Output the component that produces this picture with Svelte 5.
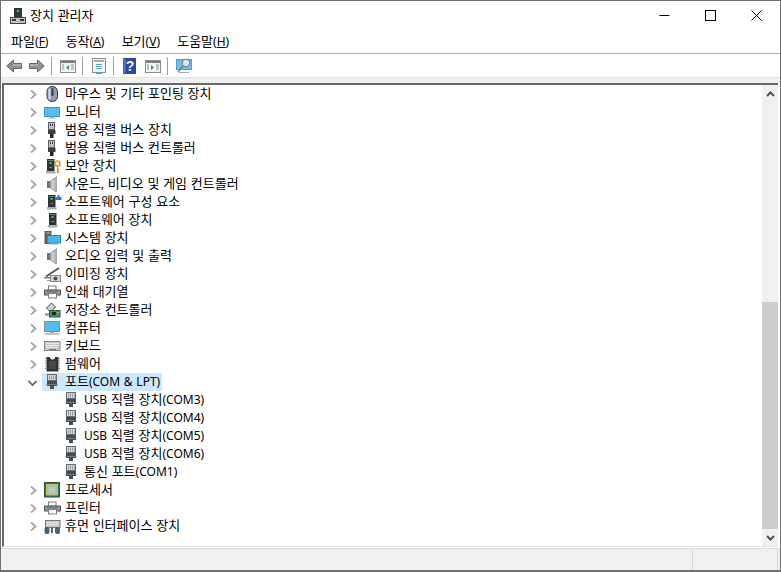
<script>
  const menus = [['파일','F'],['동작','A'],['보기','V'],['도움말','H']];
  const rows = [
    ['마우스 및 기타 포인팅 장치','mouse'],['모니터','monitor'],['범용 직렬 버스 장치','usb'],['범용 직렬 버스 컨트롤러','usb'],
    ['보안 장치','security'],['사운드, 비디오 및 게임 컨트롤러','speaker'],['소프트웨어 구성 요소','softcomp'],['소프트웨어 장치','soft'],
    ['시스템 장치','system'],['오디오 입력 및 출력','speaker'],['이미징 장치','camera'],['인쇄 대기열','printer'],
    ['저장소 컨트롤러','storage'],['컴퓨터','computer'],['키보드','keyboard'],['펌웨어','chip'],
  ];
  const ports = ['USB 직렬 장치(COM3)','USB 직렬 장치(COM4)','USB 직렬 장치(COM5)','USB 직렬 장치(COM6)','통신 포트(COM1)'];
  const after = [['프로세서','cpu'],['프린터','printer'],['휴먼 인터페이스 장치','hid']];
  const runs = (s) => s.split(/([\x20-\x7e]+)/).filter(Boolean).map((t) => ({ t, ko: !/^[\x20-\x7e]+$/.test(t) }));
</script>

{#snippet txt(s)}{#each runs(s) as r}<span class:ko={r.ko}>{r.t}</span>{/each}{/snippet}

{#snippet tower(x, y)}
  <rect x={x} y={y} width="7.500" height="12" fill="#2f3336"/>
  <rect x={x+1} y={y+1} width="5.500" height="1" fill="#70767a"/>
  <rect x={x+2.500} y={y+3} width="2" height="2" fill="#2fdc4a"/>
  <rect x={x+2} y={y+8} width="3.500" height="1" fill="#70767a"/>
  <rect x={x-1} y={y+12} width="9.500" height="2.500" fill="#a9adb0"/>
{/snippet}

{#snippet port()}
  <rect x="3.500" y="2.500" width="9" height="6" fill="#d6d8da" stroke="#686d71" stroke-width="1"/>
  <path d="M5.500 3.500v4M7.500 3.500v4M9.500 3.500v4M11.500 3.500v4" stroke="#9a9ea2"/>
  <rect x="3" y="9" width="10" height="5" fill="#484c50"/>
  <rect x="2.500" y="12" width="11" height="1" fill="#73787c"/>
  <rect x="6" y="14" width="4" height="3" fill="#484c50"/>
{/snippet}

{#snippet icon(kind)}
  <svg class="ic" width="18" height="18" viewBox="0 0 18 18">
    {#if kind==='mouse'}
      <rect x="3" y="2.500" width="10.500" height="15" rx="5" fill="#8f9db0" stroke="#34383c"/>
      <rect x="4.500" y="4.500" width="2" height="11" rx="1" fill="#d5dce4"/>
      <rect x="7.300" y="4" width="2.200" height="8" rx="1" fill="#33435a"/>
    {:else if kind==='monitor'}
      <rect x=".5" y="5.500" width="15" height="9" fill="#58bdf0" stroke="#3a95c8"/>
      <rect x="6" y="15" width="4" height="1" fill="#a8c0cc"/><rect x="4" y="16" width="8" height="1" fill="#c5d2d9"/>
    {:else if kind==='usb'}
      <rect x="4.500" y="2.500" width="6" height="7" fill="#bcc0c3" stroke="#5b6064"/>
      <rect x="6" y="4" width="1" height="2" fill="#444"/><rect x="8" y="4" width="1" height="2" fill="#444"/>
      <rect x="4" y="10" width="7.500" height="4" fill="#3a3e42"/><rect x="6" y="14" width="3.500" height="4" fill="#222527"/>
    {:else if kind==='security'}
      {@render tower(3, 3)}
      <circle cx="13.500" cy="7.500" r="2.500" fill="none" stroke="#d9a22a" stroke-width="1.700"/>
      <path d="M13.500 10v7M13.500 13.500h2M13.500 16h2" stroke="#cf9a28" stroke-width="1.300"/>
    {:else if kind==='speaker'}
      <rect x="3" y="7" width="3.500" height="7" fill="#6f7377"/>
      <path d="M6.500 7L12.500 2.500v16L6.500 14z" fill="#b5b9bc" stroke="#8d9195" stroke-width=".7"/>
      <path d="M9 6v9" stroke="#dfe1e3"/>
    {:else if kind==='softcomp'}
      {@render tower(4, 3)}
      <path d="M11.500 5h2V3h2v2h2v3h-6z" fill="#2479d2"/>
    {:else if kind==='soft'}
      {@render tower(5, 3)}
    {:else if kind==='system'}
      <rect x=".5" y="3" width="7" height="13" fill="#5b6065"/><rect x="2" y="4.500" width="4" height="1" fill="#b8bcbf"/>
      <rect x="3.500" y="7.500" width="13" height="7.500" fill="#4cb6ea" stroke="#2d86bb"/>
      <rect x="6" y="15" width="8" height="1.500" fill="#8ca0ab"/>
    {:else if kind==='camera'}
      <path d="M2 12.500L15 4" stroke="#4b4f53" stroke-width="1.700"/>
      <rect x="6.500" y="11.500" width="10" height="6" fill="#d4d6d8" stroke="#84888c"/>
      <circle cx="11.500" cy="14.500" r="2" fill="#484c50"/>
      <rect x="0" y="13" width="6" height="1.500" fill="#7c8084"/><rect x="3" y="16" width="3" height="1" fill="#999"/>
    {:else if kind==='printer'}
      <rect x="4.500" y="4" width="7.500" height="4" fill="#fff" stroke="#787c80"/>
      <rect x=".5" y="8" width="16" height="5" fill="#8d9296" stroke="#55595d"/>
      <rect x="3" y="9" width="11" height="1" fill="#2f9c6f"/>
      <rect x="4.500" y="11.500" width="8" height="4.500" fill="#fff" stroke="#787c80"/>
    {:else if kind==='storage'}
      <path d="M2.500 8l5-5 4 4-5 5z" fill="#d1d4d6" stroke="#3f4347"/>
      <rect x="5.500" y="10.500" width="10.500" height="6.500" fill="#3f9160" stroke="#2a6040"/>
      <rect x="8" y="12" width="4" height="3" fill="#26282a"/><rect x="13" y="12" width="2" height="1" fill="#d8b24a"/>
      <rect x="1" y="13" width="4" height="3" fill="#a5a9ac"/>
    {:else if kind==='computer'}
      <rect x=".5" y="3.500" width="15" height="10" fill="#55bbf0" stroke="#7f8b92"/>
      <rect x="6" y="14" width="4" height="1" fill="#9aa5ab"/><rect x=".5" y="15" width="15" height="2" fill="#c0c5c9"/>
    {:else if kind==='keyboard'}
      <rect x=".5" y="5.500" width="15.500" height="9" fill="#c7cacc" stroke="#83878a"/>
      <path d="M2 7.500h13M2 9.500h13M3 11.500h11" stroke="#f4f4f4" stroke-dasharray="1 .5"/>
      <path d="M5 13.500h7" stroke="#777"/>
    {:else if kind==='chip'}
      <rect x="2.500" y="3" width="12" height="14.500" fill="#2f3336"/>
      <path d="M2.500 4.500H1M2.500 7H1M2.500 9.500H1M2.500 12H1M2.500 14.500H1M14.500 4.500H16M14.500 7H16M14.500 9.500H16M14.500 12H16M14.500 14.500H16" stroke="#8d9195"/>
      <path d="M6 3a2.500 2.500 0 0 0 5 0" fill="#fff"/>
      <rect x="5" y="7" width="7" height="8" fill="#44494d"/>
    {:else if kind==='cpu'}
      <rect x=".5" y="2.500" width="15" height="14.500" fill="#2f6e50" stroke="#285a43"/>
      <rect x="2.500" y="4.500" width="11" height="10.500" fill="#a3c0ae" stroke="#cdbb6a"/>
      <rect x="5" y="7" width="6" height="6" fill="#b4cebd"/>
    {:else if kind==='hid'}
      <rect x="1.500" y="4.500" width="14.500" height="7" fill="#c7cacc" stroke="#777b7f"/>
      <path d="M3 6.500h12M3 8.500h12" stroke="#f4f4f4" stroke-dasharray="1 .5"/>
      <rect x=".5" y="11" width="5" height="7" rx="2" fill="#456378"/><rect x="11" y="11" width="5" height="7" rx="2" fill="#456378"/>
      <rect x="7" y="11" width="2" height="6" fill="#5e6266"/>
    {:else if kind==='port'}
      {@render port()}
    {/if}
  </svg>
{/snippet}

{#snippet chev()}
  <svg class="chev" width="18" height="18" viewBox="0 0 18 18"><path d="M7 5.500l4.500 4-4.500 4" fill="none" stroke="#a6a6a6" stroke-width="1.800"/></svg>
{/snippet}

{#snippet row(label, kind)}
  <div class="row">
    {@render chev()}
    {@render icon(kind)}
    <span class="label">{@render txt(label)}</span>
  </div>
{/snippet}

{#snippet win(play)}
  <svg width="16" height="16" viewBox="0 0 16 16">
    <rect x=".5" y="2.500" width="15" height="12" fill="#f3f4f4" stroke="#8a8e90"/>
    <rect x="1" y="3" width="14" height="2" fill="#7c8082"/>
    {#if play}<path d="M6 7l3 2.500L6 12z" fill="#2e9d48"/>{:else}<path d="M9 7L6 9.500 9 12z" fill="#2e9d48"/>{/if}
    <path d="M11 7h3M11 9h3M11 11h3M2 7h2M2 9h2M2 11h2" stroke="#8a8e90"/>
  </svg>
{/snippet}

<div class="win">
  <header class="title">
    <svg width="16" height="16" viewBox="0 0 16 16" class="appicon">
      <rect x="4" y="0" width="8" height="9" fill="#34383c"/><rect x="7" y="2" width="2" height="2" fill="#2fdc4a"/>
      <rect x=".5" y="9.500" width="15" height="6" fill="#c2c5c7" stroke="#3f4347"/><rect x="2" y="11" width="4" height="2" fill="#34383c"/><rect x="10" y="11" width="4" height="2" fill="#34383c"/>
    </svg>
    <span class="ttext">{@render txt('장치 관리자')}</span>
    <div class="caps">
      <div class="cap"><svg width="11" height="11" viewBox="0 0 11 11"><path d="M0.500 5.500h10" stroke="#000"/></svg></div>
      <div class="cap"><svg width="11" height="11" viewBox="0 0 11 11"><rect x=".5" y=".5" width="10" height="10" fill="none" stroke="#000"/></svg></div>
      <div class="cap"><svg width="11" height="11" viewBox="0 0 11 11"><path d="M.5 .5l10 10M10.500 .5l-10 10" stroke="#000"/></svg></div>
    </div>
  </header>

  <nav class="menu">
    {#each menus as [m,k]}<span class="mi"><span class="ko">{m}</span>(<u>{k}</u>)</span>{/each}
  </nav>

  <div class="tools">
    <svg class="first" width="16" height="16" viewBox="0 0 16 16"><path d="M.7 8l6.800-6v3.500h8v5h-8V14z" fill="#8f9496" stroke="#63676a"/><path d="M7 7h8" stroke="#c5c8ca"/></svg>
    <svg width="16" height="16" viewBox="0 0 16 16"><path d="M15.300 8L8.500 2v3.500h-8v5h8V14z" fill="#8f9496" stroke="#63676a"/><path d="M1 7h8" stroke="#c5c8ca"/></svg>
    <i class="sep"></i>
    {@render win(false)}
    <i class="sep"></i>
    <svg width="16" height="16" viewBox="0 0 16 16"><rect x="1.500" y=".5" width="13" height="14" fill="#f2f3f3" stroke="#8a8e90"/><rect x="3" y="2" width="10" height="2" fill="#a8acae"/><path d="M5 6.500h6M5 8.500h6M5 10.500h6" stroke="#67a7d8"/><rect x="5" y="14" width="6" height="2" fill="#3da6e0"/></svg>
    <i class="sep wide"></i>
    <svg width="16" height="16" viewBox="0 0 16 16"><rect x="0" y="0" width="13" height="16" fill="#2a48a8"/><rect x=".5" y="1" width="2" height="14" fill="#5c78c8"/><text x="7" y="13" text-anchor="middle" font-size="14" font-weight="700" font-family="Liberation Sans" fill="#f2f2f2">?</text></svg>
    {@render win(true)}
    <i class="sep"></i>
    <svg width="16" height="16" viewBox="0 0 16 16"><rect x=".5" y="1.500" width="15" height="10" fill="#6ebdea" stroke="#4f9fcb"/><circle cx="10" cy="5" r="3.800" fill="#cfe9f7" stroke="#6b7d88"/><path d="M7 8l-5 6" stroke="#6b7d88" stroke-width="1.500"/><path d="M3 14.500h10" stroke="#9ab"/></svg>
  </div>

  <div class="band"></div>

  <div class="content">
    <div class="tree">
      {#each rows as [l,k]}{@render row(l,k)}{/each}
      <div class="row">
        <svg class="chev" width="18" height="18" viewBox="0 0 18 18"><path d="M4.500 8l4 4 4-4" fill="none" stroke="#5a5a5a" stroke-width="1.700"/></svg>
        <div class="sel">{@render icon('port')}<span class="label">{@render txt('포트(COM & LPT)')}</span></div>
      </div>
      {#each ports as p}
        <div class="row child">{@render icon('port')}<span class="label">{@render txt(p)}</span></div>
      {/each}
      {#each after as [l,k]}{@render row(l,k)}{/each}
    </div>
    <div class="sb">
      <div class="btn"><svg width="9" height="6" viewBox="0 0 9 6"><path d="M1 5l3.500-3.500L8 5" fill="none" stroke="#505050" stroke-width="2"/></svg></div>
      <div class="track"><div class="thumb"></div></div>
      <div class="btn"><svg width="9" height="6" viewBox="0 0 9 6"><path d="M1 1l3.500 3.500L8 1" fill="none" stroke="#505050" stroke-width="2"/></svg></div>
    </div>
  </div>

  <footer class="status"><div class="s1"></div><div class="s2"></div><div class="s3"></div></footer>
</div>

<style>
  :global(body){margin:0;background:#fff}
  .win{width:781px;height:572px;box-sizing:border-box;border:1px solid #707070;border-bottom-width:2px;background:#fff;display:flex;flex-direction:column;font-family:"Noto Sans","Noto Sans CJK KR",sans-serif;font-size:12px;color:#000}
  .ko{font-family:"Noto Sans CJK KR",sans-serif;font-size:13px}
  .title{height:29px;display:flex;align-items:center;flex:none}
  .appicon{margin-left:9px}
  .ttext{margin-left:4px;margin-bottom:3px;word-spacing:.6px}
  .caps{margin-left:auto;display:flex;margin-right:1px}
  .cap{width:46px;height:29px;display:flex;align-items:center;justify-content:center}
  .menu{height:23px;display:flex;flex:none;align-items:center;padding-left:1.5px;border-bottom:1px solid #a9adb8}
  .mi{padding:0 8.6px 2px;white-space:nowrap}
  .tools{height:22px;padding-top:1px;flex:none;display:flex;align-items:center;gap:6px;padding-left:5px}
  .first{margin-right:1px}
  .sep{width:1px;height:18px;background:#a0a0a0;margin-right:2px}
  .sep.wide{margin-right:3px}
  .band{height:6px;flex:none;background:#f0f0f0;border-top:1px solid #e4e4e4;box-sizing:border-box}
  .content{flex:1;min-height:0;display:flex;margin-left:1px;margin-right:2px;border-top:2px solid #696969;border-left:2px solid #696969;border-bottom:1px solid #e3e3e3;background:#fff}
  .tree{flex:1}
  .row{height:18px;display:flex;align-items:center;padding-left:20px;white-space:nowrap}
  .chev{flex:none}
  .ic{flex:none;margin-left:2px;margin-bottom:2px}
  .label{margin-left:3px;padding-bottom:2px;line-height:16px;word-spacing:.6px}
  .sel{display:flex;align-items:center;background:#cce8ff;height:18px;padding-right:2px}
  .child{padding-left:57px}
  .sb{width:16px;flex:none;display:flex;flex-direction:column;background:#f0f0f0}
  .btn{height:17px;display:flex;align-items:center;justify-content:center;flex:none}
  .track{flex:1;display:flex;flex-direction:column;justify-content:flex-end}
  .thumb{height:227px;background:#cdcdcd}
  .status{height:21px;flex:none;margin-top:1px;display:flex;background:#f0f0f0;border-top:1px solid #dcdcdc}
  .s1{flex:1;border-right:1px solid #d8d8d8}
  .s2{width:84px;border-right:1px solid #d8d8d8}
  .s3{width:2px}
</style>
